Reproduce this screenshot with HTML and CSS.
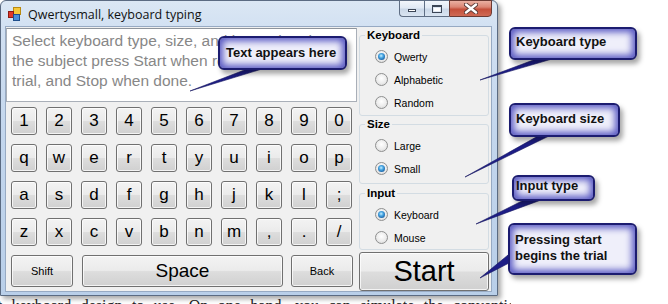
FILE: index.html
```html
<!DOCTYPE html>
<html>
<head>
<meta charset="utf-8">
<link rel="stylesheet" href="styles.css">
</head>
<body>
<div class="doc">
  <p>what keyboard design to use. On one hand, you can simulate the conventional keyboard layout</p>
</div>

<div class="window">
  <div class="titlebar">
    <svg class="app-icon" width="13" height="14" viewBox="0 0 13 14">
      <rect x="5.5" y="0.5" width="7" height="7" fill="#f6c83a" stroke="#b98a10"/>
      <rect x="0.5" y="4.5" width="5" height="6" fill="#e0382a" stroke="#8e1a12"/>
      <rect x="5.5" y="7.5" width="6" height="6" fill="#4c8fd8" stroke="#1f4f8c"/>
    </svg>
    <span class="title">Qwertysmall, keyboard typing</span>
    <div class="controls">
      <span class="ctl min"><span class="glyph-min"></span></span>
      <span class="ctl max"><span class="glyph-max"></span></span>
      <span class="ctl close">
        <svg width="14" height="11" viewBox="0 0 14 11">
          <path d="M2 1.5 L12 9.5 M12 1.5 L2 9.5" stroke="#5a3a36" stroke-width="4.2" stroke-linecap="round"/>
          <path d="M2 1.5 L12 9.5 M12 1.5 L2 9.5" stroke="#ffffff" stroke-width="2.4" stroke-linecap="round"/>
        </svg>
      </span>
    </div>
  </div>

  <div class="client">
    <div class="left">
      <div class="textbox">Select keyboard type, size, and input, then have the subject press Start when ready to begin the trial, and Stop when done.</div>
      <div class="keys">
        <div class="key-grid">
          <div class="key">1</div><div class="key">2</div><div class="key">3</div><div class="key">4</div><div class="key">5</div>
          <div class="key">6</div><div class="key">7</div><div class="key">8</div><div class="key">9</div><div class="key">0</div>
          <div class="key">q</div><div class="key">w</div><div class="key">e</div><div class="key">r</div><div class="key">t</div>
          <div class="key">y</div><div class="key">u</div><div class="key">i</div><div class="key">o</div><div class="key">p</div>
          <div class="key">a</div><div class="key">s</div><div class="key">d</div><div class="key">f</div><div class="key">g</div>
          <div class="key">h</div><div class="key">j</div><div class="key">k</div><div class="key">l</div><div class="key">;</div>
          <div class="key">z</div><div class="key">x</div><div class="key">c</div><div class="key">v</div><div class="key">b</div>
          <div class="key">n</div><div class="key">m</div><div class="key">,</div><div class="key">.</div><div class="key">/</div>
        </div>
        <div class="bottom-row">
          <div class="key wide shift">Shift</div>
          <div class="key space">Space</div>
          <div class="key wide back">Back</div>
        </div>
      </div>
    </div>

    <div class="right">
      <fieldset class="group g-keyboard">
        <legend>Keyboard</legend>
        <div class="radio on"><i></i>Qwerty</div>
        <div class="radio"><i></i>Alphabetic</div>
        <div class="radio"><i></i>Random</div>
      </fieldset>
      <fieldset class="group g-size">
        <legend>Size</legend>
        <div class="radio"><i></i>Large</div>
        <div class="radio on"><i></i>Small</div>
      </fieldset>
      <fieldset class="group g-input">
        <legend>Input</legend>
        <div class="radio on"><i></i>Keyboard</div>
        <div class="radio"><i></i>Mouse</div>
      </fieldset>
      <div class="key start">Start</div>
    </div>
  </div>
</div>

<svg class="pointers" width="668" height="304" viewBox="0 0 668 304">
  <g fill="#1d1d86" stroke="#151560" stroke-width="0.6" stroke-linejoin="round">
    <polygon points="247,69 262,69 190,91"/>
    <polygon points="536,59 552,59 480,80"/>
    <polygon points="538,136 549,136 465,177"/>
    <polygon points="524,200 541,200 476,224"/>
    <polygon points="508,255 511,262 480,278"/>
  </g>
</svg>

<div class="callout c1">Text appears here</div>
<div class="callout c2">Keyboard type</div>
<div class="callout c3">Keyboard size</div>
<div class="callout c4">Input type</div>
<div class="callout c5">Pressing start<br>begins the trial</div>
</body>
</html>
```

FILE: styles.css
```css
html, body {
  margin: 0;
  padding: 0;
}

body {
  width: 668px;
  height: 304px;
  overflow: hidden;
  background: #ffffff;
  position: relative;
}

/* document behind the window: only its last line shows below it */
.doc {
  width: 540px;
  height: 304px;
  overflow: hidden;
  margin-left: -29px;
  padding-top: 296px;
  box-sizing: border-box;
  font-family: "Liberation Serif", serif;
  font-size: 16px;
  line-height: 20px;
  color: #222;
  word-spacing: 5.5px;
}

.doc p {
  margin: 0;
  white-space: nowrap;
}

/* window */
.window {
  position: absolute;
  left: 0;
  top: 0;
  width: 498px;
  height: 296px;
  box-sizing: border-box;
  border: 1px solid #5b6b82;
  border-radius: 6px 6px 0 0;
  background: linear-gradient(180deg, #dbe7f4 0%, #d1e0f2 10%, #c3d6ed 45%, #b9cfe9 100%);
  box-shadow: 3px 3px 5px rgba(0, 0, 0, 0.35);
  padding: 0 5px 3px 4px;
  display: flex;
  flex-direction: column;
}

.titlebar {
  height: 25px;
  display: flex;
  align-items: center;
  padding-left: 3px;
  flex: none;
}

.app-icon {
  flex: none;
  margin-top: 1px;
}

.title {
  margin-left: 7px;
  font-family: "Open Sans", "Liberation Sans", sans-serif;
  font-size: 12.5px;
  color: #111;
  margin-top: 1px;
}

.controls {
  margin-left: auto;
  align-self: flex-start;
  display: flex;
  margin-top: -1px;
}

.ctl {
  height: 17px;
  box-sizing: border-box;
  display: flex;
  align-items: center;
  justify-content: center;
  border: 1px solid #5f6e84;
}

.min {
  width: 25px;
  border-right: none;
  border-radius: 0 0 0 4px;
  background: linear-gradient(180deg, #f2f6fb 0%, #e0e9f4 45%, #cbd8e8 55%, #dae5f2 100%);
  align-items: flex-end;
  padding-bottom: 4px;
}

.max {
  width: 25px;
  border-right: none;
  background: linear-gradient(180deg, #f2f6fb 0%, #e0e9f4 45%, #cbd8e8 55%, #dae5f2 100%);
}

.glyph-min {
  width: 8px;
  height: 3px;
  box-sizing: border-box;
  border: 1px solid #3c4656;
  background: #fff;
}

.glyph-max {
  width: 10px;
  height: 8px;
  box-sizing: border-box;
  border: 1px solid #3c4656;
  border-top-width: 2px;
  background: #fff;
  box-shadow: inset 0 0 0 1px #dfe7f2;
}

.close {
  width: 43px;
  border-color: #6b3a33;
  border-radius: 0 0 4px 0;
  background: linear-gradient(180deg, #eab0a2 0%, #db8675 40%, #c5503b 55%, #cf6a55 100%);
}

/* client area */
.client {
  flex: 1;
  display: flex;
  background: #f0f0f0;
  border: 1px solid #97aac3;
}

.left {
  width: 351px;
  display: flex;
  flex-direction: column;
}

.textbox {
  margin-top: 1px;
  height: 74px;
  box-sizing: border-box;
  border: 1px solid #a9afb8;
  border-top-color: #8e949c;
  background: #ffffff;
  padding: 2px 4px 0 5px;
  font-family: "Liberation Sans", Arial, sans-serif;
  font-size: 15.5px;
  line-height: 20px;
  color: #878787;
}

.keys {
  margin-top: 5px;
  padding-left: 5px;
}

.key-grid {
  display: grid;
  grid-template-columns: repeat(10, 26px);
  grid-auto-rows: 28px;
  column-gap: 9px;
  row-gap: 9px;
}

.key {
  box-sizing: border-box;
  border: 1px solid #707070;
  border-radius: 3px;
  background: linear-gradient(180deg, #f3f3f3 0%, #ebebeb 48%, #dddddd 52%, #d0d0d0 100%);
  box-shadow: inset 0 0 0 1px rgba(255, 255, 255, 0.75);
  display: flex;
  align-items: center;
  justify-content: center;
  font-family: "Liberation Sans", Arial, sans-serif;
  font-size: 17px;
  color: #000;
}

.bottom-row {
  margin-top: 9px;
  display: flex;
  height: 32px;
}

.bottom-row .key {
  height: 32px;
}

.wide {
  width: 62px;
  font-size: 11px;
}

.space {
  width: 201px;
  margin-left: 9px;
  font-size: 19px;
}

.back {
  margin-left: 8px;
}

/* right column */
.right {
  width: 130px;
  margin-left: 2px;
  margin-top: 2px;
  display: flex;
  flex-direction: column;
}

.group {
  margin: 0;
  min-width: 0;
  border: 1px solid #d3dce3;
  border-radius: 3px;
  padding: 3px 5px 1px 5px;
}

.group legend {
  padding: 0 2px;
  font-family: "Liberation Sans", Arial, sans-serif;
  font-weight: bold;
  font-size: 11.5px;
  line-height: 13px;
  height: 13px;
  color: #000;
}

.g-size {
  margin-top: 2px;
  padding-bottom: 3px;
}

.g-input {
  margin-top: 3px;
  padding-bottom: 0;
}

.radio {
  height: 23px;
  display: flex;
  align-items: center;
  padding-left: 10px;
  font-family: "Liberation Sans", Arial, sans-serif;
  font-size: 10.5px;
  color: #000;
}

.radio i {
  position: relative;
  width: 13px;
  height: 13px;
  box-sizing: border-box;
  border: 1px solid #8e8f8f;
  border-radius: 50%;
  background: radial-gradient(circle at 50% 40%, #ffffff 0%, #ececec 55%, #d2d2d2 100%);
  margin-right: 6px;
  flex: none;
}

.radio.on i::after {
  content: "";
  position: absolute;
  left: 2px;
  top: 2px;
  width: 7px;
  height: 7px;
  border-radius: 50%;
  background: radial-gradient(circle at 45% 40%, #c9f0ff 0%, #4aa8e4 35%, #1b63a6 75%, #0f416f 100%);
}

.start {
  margin-top: 2px;
  height: 39px;
  font-size: 29px;
}

/* annotations */
.pointers {
  position: absolute;
  left: 0;
  top: 0;
}

.callout {
  position: absolute;
  box-sizing: border-box;
  border: 2px solid #1c1c70;
  border-radius: 6px;
  background: #efeffa;
  box-shadow: inset 0 0 7px 3px #5656c2, 3px 4px 5px rgba(0, 0, 0, 0.35);
  font-family: "Liberation Sans", Arial, sans-serif;
  font-weight: bold;
  font-size: 13px;
  line-height: 16px;
  color: #111;
  display: flex;
  align-items: center;
  padding-left: 6px;
}

.c1 { left: 218px; top: 36px; width: 129px; height: 34px; }
.c2 { left: 509px; top: 27px; width: 128px; height: 33px; padding-bottom: 3px; padding-left: 5px; }
.c3 { left: 509px; top: 103px; width: 111px; height: 34px; padding-bottom: 2px; padding-left: 5px; }
.c4 { left: 512px; top: 175px; width: 83px; height: 26px; padding-bottom: 5px; padding-left: 2px; }
.c5 { left: 508px; top: 223px; width: 129px; height: 52px; padding-left: 5px; padding-bottom: 2px; }
```
